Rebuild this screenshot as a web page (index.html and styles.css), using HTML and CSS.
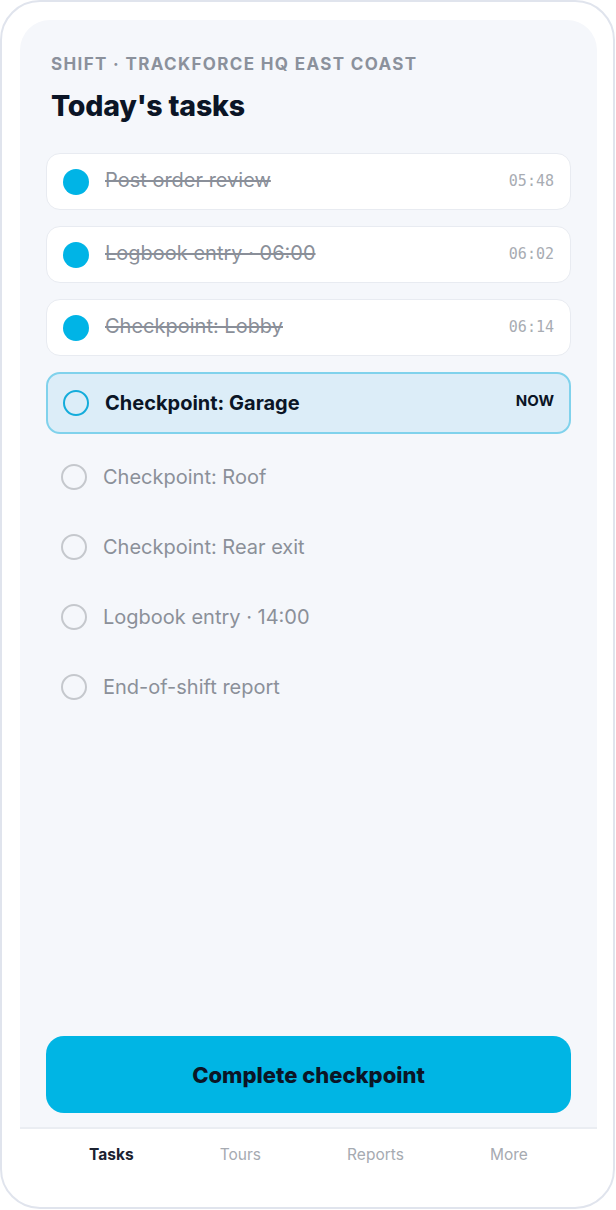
FILE: index.html
```html
<!DOCTYPE html>
<html lang="en">
<head>
    <meta charset="UTF-8">
    <title>Today's tasks</title>
    <link rel="stylesheet" href="styles.css">
</head>
<body>
    <div class="frame">
        <div class="panel">
            <div class="shift">SHIFT · TRACKFORCE HQ EAST COAST</div>
            <h1>Today's tasks</h1>

            <div class="cards">
                <div class="card done">
                    <span class="dot"></span>
                    <span class="name">Post order review</span>
                    <span class="time">05:48</span>
                </div>
                <div class="card done">
                    <span class="dot"></span>
                    <span class="name">Logbook entry · 06:00</span>
                    <span class="time">06:02</span>
                </div>
                <div class="card done">
                    <span class="dot"></span>
                    <span class="name">Checkpoint: Lobby</span>
                    <span class="time">06:14</span>
                </div>
                <div class="card active">
                    <span class="dot"></span>
                    <span class="name">Checkpoint: Garage</span>
                    <span class="now">NOW</span>
                </div>
            </div>

            <div class="pending">
                <div class="row"><span class="dot"></span><span class="name">Checkpoint: Roof</span></div>
                <div class="row"><span class="dot"></span><span class="name">Checkpoint: Rear exit</span></div>
                <div class="row"><span class="dot"></span><span class="name">Logbook entry · 14:00</span></div>
                <div class="row"><span class="dot"></span><span class="name">End-of-shift report</span></div>
            </div>

            <button class="complete">Complete checkpoint</button>
        </div>

        <div class="nav">
            <span class="tab current">Tasks</span>
            <span class="tab">Tours</span>
            <span class="tab">Reports</span>
            <span class="tab">More</span>
        </div>
    </div>
</body>
</html>
```

FILE: styles.css
```css
body {
    margin: 0;
    background: #fff;
    font-family: Inter, "Noto Sans", sans-serif;
}

.frame {
    width: 615px;
    height: 1209px;
    box-sizing: border-box;
    border: 2px solid #e0e4ed;
    border-radius: 40px;
    padding: 18px 16px 0 18px;
    display: flex;
    flex-direction: column;
    background: #fff;
}

.panel {
    flex: 1;
    background: #f5f7fb;
    border-radius: 30px 30px 0 0;
    padding: 34px 26px 14px;
    display: flex;
    flex-direction: column;
}

.shift {
    padding-left: 5px;
    font-size: 17px;
    line-height: 20px;
    font-weight: 700;
    letter-spacing: 1.35px;
    color: #8b919c;
}

h1 {
    margin: 15px 0 0;
    padding-left: 5px;
    font-size: 28.5px;
    line-height: 34px;
    font-weight: 800;
    color: #0b1526;
    letter-spacing: -0.2px;
}

.cards {
    margin-top: 30px;
    display: flex;
    flex-direction: column;
    gap: 16px;
}

.card {
    height: 57px;
    box-sizing: border-box;
    background: #fff;
    border: 1px solid #e8ebf1;
    border-radius: 14px;
    padding: 0 16px;
    display: flex;
    align-items: center;
    gap: 16px;
}

.dot {
    width: 26px;
    height: 26px;
    box-sizing: border-box;
    border-radius: 50%;
    flex-shrink: 0;
}

.name {
    flex: 1;
    font-size: 20px;
    color: #8a8f99;
}

.done .dot {
    background: #00b4e6;
}

.done .name {
    text-decoration: line-through;
    margin-bottom: 3px;
}

.time {
    font-family: "DejaVu Sans Mono", monospace;
    font-size: 15px;
    color: #a8acb3;
    margin-bottom: 2px;
}

.card.active {
    height: 62px;
    background: #dcedf8;
    border: 2px solid #80d2ec;
    padding: 0 15px;
}

.active .dot {
    border: 2px solid #14acdb;
}

.active .name {
    font-weight: 700;
    color: #0b1526;
}

.now {
    font-size: 15px;
    font-weight: 700;
    color: #0b1526;
    margin-bottom: 6px;
}

.pending {
    margin-top: 8px;
}

.row {
    height: 70px;
    padding-left: 15px;
    display: flex;
    align-items: center;
    gap: 16px;
}

.row .dot {
    border: 2px solid #c5c8cd;
}

.row .name {
    color: #8b9099;
}

.complete {
    margin-top: auto;
    height: 77px;
    border: none;
    border-radius: 18px;
    background: #00b5e4;
    font-family: Inter, sans-serif;
    font-size: 22px;
    font-weight: 800;
    color: #0b1526;
    cursor: pointer;
}

.nav {
    height: 80px;
    box-sizing: border-box;
    border-top: 2px solid #eaedf2;
    padding: 16px 26px 0;
    display: flex;
    justify-content: space-around;
    align-items: flex-start;
}

.tab {
    font-size: 15.5px;
    line-height: 20px;
    color: #a6aab1;
}

.tab.current {
    font-weight: 700;
    color: #1c2230;
}
```
